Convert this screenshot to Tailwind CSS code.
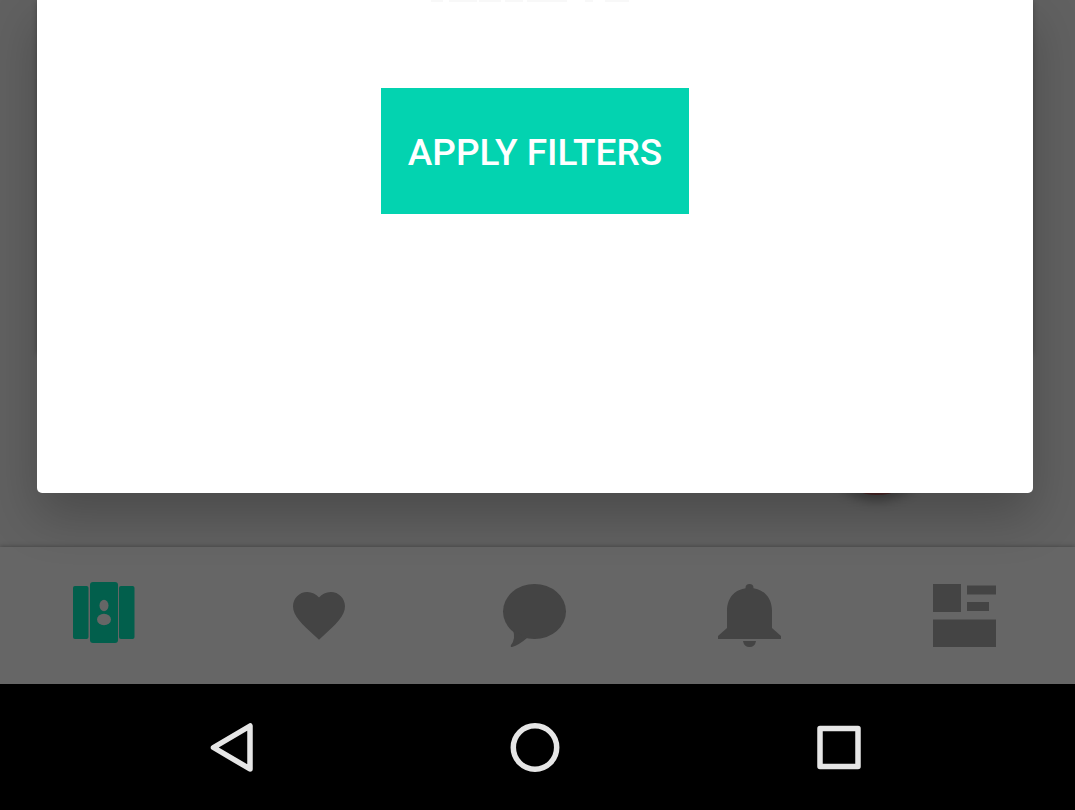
<!DOCTYPE html>
<html lang="en">
<head>
<meta charset="utf-8">
<meta name="viewport" content="width=device-width, initial-scale=1">
<title>Filters</title>
<script src="https://cdn.jsdelivr.net/npm/@tailwindcss/browser@4"></script>
</head>
<body class="flex min-h-screen flex-col overflow-hidden bg-[#616161] font-['Roboto',sans-serif]">
  <main class="relative flex flex-1 flex-col pr-[42px] pb-[54px] pl-[37px]">
    <!-- Card and floating button behind the dialog -->
    <div class="absolute top-0 right-[43px] left-[38px] h-[352px] shadow-[0_2px_6px_rgba(0,0,0,0.35)]"></div>
    <div class="absolute right-[142px] bottom-[52px] size-[112px] rounded-full bg-[#4a2525] shadow-[0_5px_12px_rgba(0,0,0,0.35)]"></div>
    <section role="dialog" aria-label="Filters" class="relative z-10 flex flex-1 flex-col items-center rounded-b-[5px] bg-white shadow-[0_22px_50px_rgba(0,0,0,0.24)]">
      <svg class="h-[2px] w-[208px]" viewBox="0 0 208 2" fill="#f8f8f8" aria-hidden="true"><path d="M0 0h12v2H0zM18 0h28v2H18zM48 0h22v2H48zM74 0h18v2H74zM96 0h40v2H96zM154 0h8v2h-8zM174 0h24v2h-24z"/></svg>
      <button type="button" class="mt-[86px] h-[126px] bg-[#03d3b0] px-[27px] pt-[3px] text-[37px] leading-[42px] font-medium text-white">APPLY FILTERS</button>
    </section>
  </main>

  <nav aria-label="Main" class="grid h-[137px] grid-cols-5 bg-[#666666] text-[#444444] shadow-[0_-1px_4px_rgba(0,0,0,0.25)]">
    <button type="button" aria-label="Profiles" class="flex items-center justify-center text-[#025f4c]">
      <svg class="size-[71px]" viewBox="0 0 71 71" fill="currentColor"><rect x="1" y="6" width="15.500" height="53" rx="2"/><rect x="47" y="6" width="15.500" height="53" rx="2"/><rect x="18" y="2" width="28" height="61" rx="3"/><ellipse cx="32" cy="25.500" rx="4.500" ry="5.700" fill="#666666"/><ellipse cx="32" cy="39.500" rx="7" ry="5.700" fill="#666666"/></svg>
    </button>
    <button type="button" aria-label="Favorites" class="flex items-center justify-center">
      <svg class="size-[71px]" viewBox="0 0 71 71" fill="currentColor"><path transform="translate(.8 4.200) scale(2.600)" d="M12 21.350l-1.450-1.320C5.400 15.360 2 12.280 2 8.500 2 5.420 4.420 3 7.500 3c1.740 0 3.410.81 4.500 2.090C13.090 3.810 14.760 3 16.500 3 19.580 3 22 5.420 22 8.500c0 3.780-3.400 6.860-8.550 11.540L12 21.350z"/></svg>
    </button>
    <button type="button" aria-label="Messages" class="flex items-center justify-center">
      <svg class="size-[71px]" viewBox="0 0 71 71" fill="currentColor"><ellipse cx="32.500" cy="31.500" rx="31.500" ry="27.500"/><path d="M11 50Q14 59 9 65Q8 67 10 67Q17 65 25 58Z"/></svg>
    </button>
    <button type="button" aria-label="Notifications" class="flex items-center justify-center">
      <svg class="size-[71px]" viewBox="0 0 71 71" fill="currentColor"><circle cx="32.500" cy="8" r="4"/><path d="M10 48V31C10 17 19 8 32.500 8S55 17 55 31v17l9 8v3H1v-3zM26 61h13q-1 6-6.500 6T26 61z"/></svg>
    </button>
    <button type="button" aria-label="Feed" class="flex items-center justify-center">
      <svg class="size-[71px]" viewBox="0 0 71 71" fill="currentColor"><path d="M1 4h28v28H1zM35 5.500h29v9H35zM35 22h22v9H35zM1 39.500h63v27.500H1z"/></svg>
    </button>
  </nav>

  <footer class="relative z-20 grid h-[126px] grid-cols-3 bg-black pr-[84px] pl-20 text-[#e6e6e6]">
    <button type="button" aria-label="Back" class="flex items-center justify-center">
      <svg class="size-[52px]" viewBox="0 0 52 52" fill="none" stroke="currentColor" stroke-width="5.500" stroke-linejoin="round"><path d="M7.500 26.500 44 5v43z"/></svg>
    </button>
    <button type="button" aria-label="Home" class="flex items-center justify-center">
      <svg class="size-[52px]" viewBox="0 0 52 52" fill="none" stroke="currentColor" stroke-width="5.500"><circle cx="26" cy="26.500" r="21.700"/></svg>
    </button>
    <button type="button" aria-label="Recent apps" class="flex items-center justify-center">
      <svg class="size-[52px]" viewBox="0 0 52 52" fill="none" stroke="currentColor" stroke-width="5.500" stroke-linejoin="round"><rect x="7" y="7.500" width="38" height="38"/></svg>
    </button>
  </footer>
</body>
</html>
